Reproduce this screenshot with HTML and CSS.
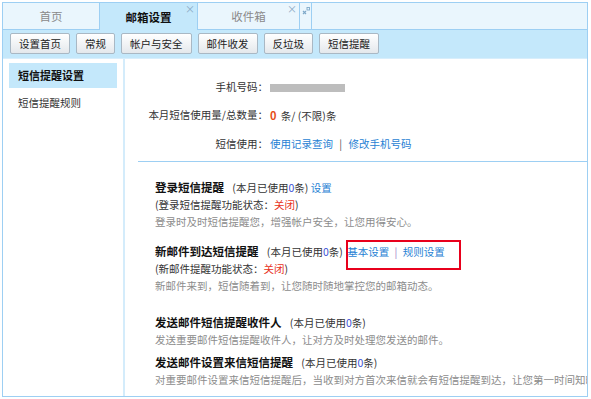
FILE: index.html
```html
<!DOCTYPE html>
<html lang="zh-CN">
<head>
    <meta charset="UTF-8">
    <title>邮箱设置 - 短信提醒</title>
    <link rel="stylesheet" href="styles.css">
</head>
<body>
    <div class="frame">
        <div class="tabs">
            <div class="tab">首页</div>
            <div class="tab active">邮箱设置<span class="close">×</span></div>
            <div class="tab tab-inbox">收件箱<span class="close">×</span></div>
            <div class="tab tab-mini">
                <svg width="8" height="8" viewBox="0 0 8 8">
                    <path d="M1 7 L4 4 M1 4 L4 7" stroke="#7fa9c9" stroke-width="1.2" fill="none"/>
                    <rect x="5" y="0.5" width="2.5" height="2.5" fill="none" stroke="#7fa9c9" stroke-width="0.9"/>
                </svg>
            </div>
            <div class="tab-rest"></div>
        </div>

        <div class="toolbar">
            <button class="tool-btn">设置首页</button>
            <button class="tool-btn">常规</button>
            <button class="tool-btn">帐户与安全</button>
            <button class="tool-btn">邮件收发</button>
            <button class="tool-btn">反垃圾</button>
            <button class="tool-btn">短信提醒</button>
        </div>

        <div class="main">
            <div class="sidebar">
                <div class="side-item selected">短信提醒设置</div>
                <div class="side-item">短信提醒规则</div>
            </div>

            <div class="content">
                <div class="info">
                    <div class="info-label">手机号码：</div>
                    <div class="info-value"><span class="phone-mask"></span></div>

                    <div class="info-label">本月短信使用量/总数量：</div>
                    <div class="info-value"><b class="count">0</b> 条/ (不限)条</div>

                    <div class="info-label">短信使用：</div>
                    <div class="info-value">
                        <a href="#">使用记录查询</a>
                        <span class="sep">|</span>
                        <a href="#">修改手机号码</a>
                    </div>
                </div>

                <div class="divider"></div>

                <div class="sections">
                    <div class="section">
                        <div class="title-line">
                            <span class="title">登录短信提醒</span>
                            <span class="used">(本月已使用<span class="num">0</span>条)</span>
                            <a href="#">设置</a>
                        </div>
                        <div class="state">(登录短信提醒功能状态：<span class="off">关闭</span>)</div>
                        <div class="desc">登录时及时短信提醒您，增强帐户安全，让您用得安心。</div>
                    </div>

                    <div class="section section-new">
                        <div class="title-line">
                            <span class="title">新邮件到达短信提醒</span>
                            <span class="used">(本月已使用<span class="num">0</span>条)</span>
                            <span class="links">
                                <a href="#">基本设置</a>
                                <span class="sep-purple">|</span>
                                <a href="#">规则设置</a>
                            </span>
                            <span class="highlight"></span>
                        </div>
                        <div class="state">(新邮件提醒功能状态：<span class="off">关闭</span>)</div>
                        <div class="desc">新邮件来到，短信随着到，让您随时随地掌控您的邮箱动态。</div>
                    </div>

                    <div class="section section-send">
                        <div class="title-line">
                            <span class="title">发送邮件短信提醒收件人</span>
                            <span class="used">(本月已使用<span class="num">0</span>条)</span>
                        </div>
                        <div class="desc">发送重要邮件短信提醒收件人，让对方及时处理您发送的邮件。</div>
                    </div>

                    <div class="section">
                        <div class="title-line">
                            <span class="title">发送邮件设置来信短信提醒</span>
                            <span class="used">(本月已使用<span class="num">0</span>条)</span>
                        </div>
                        <div class="desc">对重要邮件设置来信短信提醒后，当收到对方首次来信就会有短信提醒到达，让您第一时间知晓。</div>
                    </div>
                </div>
            </div>
        </div>
    </div>
</body>
</html>
```

FILE: styles.css
```css
body {
    margin: 0;
    background: #fff;
    font-family: "Noto Sans CJK SC", "Liberation Sans", sans-serif;
    font-size: 10.5px;
    color: #333;
}
a {
    color: #1f7fd4;
    text-decoration: none;
}
.frame {
    margin: 2px 0 0 2px;
    width: 586px;
    height: 395px;
    border: 1px solid #9dcff3;
    border-top: none;
    box-sizing: border-box;
    overflow: hidden;
    display: flex;
    flex-direction: column;
}

/* tab bar */
.tabs {
    display: flex;
    height: 28px;
    background: #eaf6fd;
    border-top: 1px solid #9dcff3;
    box-sizing: border-box;
}
.tab {
    position: relative;
    width: 96px;
    border-right: 1px solid #9dcff3;
    border-bottom: 1px solid #9dcff3;
    display: flex;
    align-items: center;
    justify-content: center;
    color: #8a8a8a;
    font-size: 11.5px;
}
.tab.active {
    width: 97px;
    background: #c4e8fb;
    border-bottom: none;
    color: #111;
    font-weight: bold;
}
.tab-inbox {
    width: 101px;
}
.tab-mini {
    width: 12px;
    align-items: flex-start;
    padding-top: 4px;
    box-sizing: border-box;
}
.tab-rest {
    flex: 1;
    border-bottom: 1px solid #9dcff3;
}
.close {
    position: absolute;
    top: 1px;
    right: 2px;
    font-size: 10px;
    font-weight: normal;
    color: #8aa9c4;
    line-height: 10px;
}

/* toolbar */
.toolbar {
    height: 28px;
    background: #c4e8fb;
    display: flex;
    align-items: flex-start;
    gap: 6px;
    padding: 3px 0 0 7px;
    box-sizing: border-box;
}
.tool-btn {
    height: 21px;
    min-width: 37px;
    padding: 0 8px;
    border: 1px solid #a9b8c4;
    border-radius: 2px;
    background: linear-gradient(#ffffff, #e4e8ec);
    font-family: inherit;
    font-size: 10.5px;
    color: #222;
    cursor: pointer;
}

/* body */
.main {
    flex: 1;
    display: flex;
    min-height: 0;
    border-top: 1px solid #d8eefc;
}
.sidebar {
    flex: 0 0 122px;
    padding: 4px 6px;
    box-sizing: border-box;
    border-right: 2px solid #d4ecfb;
}
.side-item {
    height: 25px;
    line-height: 25px;
    padding-left: 9px;
    color: #333;
}
.side-item.selected {
    background: #c4e8fb;
    font-weight: bold;
    font-size: 11px;
    color: #111;
    margin-bottom: 2px;
}

.content {
    flex: 1;
    min-width: 0;
    overflow: hidden;
    padding: 13px 0 0 13px;
}
.info {
    display: grid;
    grid-template-columns: 130px 1fr;
    grid-auto-rows: 28.5px;
    align-items: center;
}
.info-label {
    text-align: right;
    color: #333;
    white-space: nowrap;
}
.info-value {
    padding-left: 2px;
    color: #333;
}
.phone-mask {
    display: inline-block;
    width: 75px;
    height: 8px;
    background: #bdbdbd;
    vertical-align: middle;
}
.count {
    color: #e5501a;
    font-size: 11px;
    margin-right: 2px;
}
.sep {
    color: #555;
    margin: 0 4px;
}
.divider {
    margin-top: 3px;
    height: 1px;
    background: #9dcff3;
}

.sections {
    padding: 17px 0 0 17px;
}
.section {
    margin-bottom: 13px;
    line-height: 17px;
    white-space: nowrap;
}
.section-new {
    margin-bottom: 20px;
}
.section-send {
    margin-bottom: 6px;
}
.title-line {
    position: relative;
}
.title {
    font-weight: bold;
    font-size: 11.5px;
    color: #111;
    margin-right: 6px;
}
.used {
    color: #333;
}
.num {
    color: #3b4fd6;
}
.off {
    color: #e8321c;
}
.state {
    color: #333;
}
.desc {
    color: #8c8c8c;
}
.links {
    margin-left: 2px;
}
.sep-purple {
    color: #a07ac8;
    margin: 0 3px;
}
.highlight {
    position: absolute;
    left: 191px;
    top: -3px;
    width: 115px;
    height: 30px;
    border: 2px solid #e8001c;
    box-sizing: border-box;
}
```
